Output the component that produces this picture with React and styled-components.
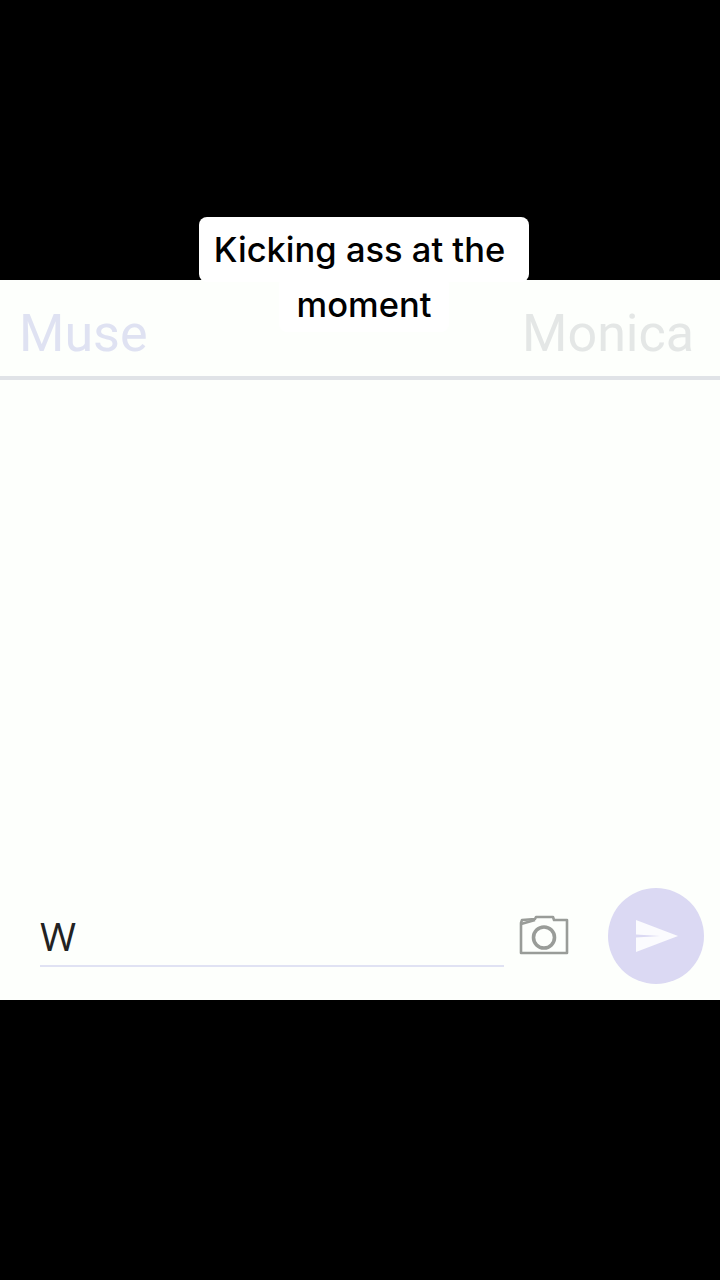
import React from "react";
import styled, { createGlobalStyle } from "styled-components";

const Global = createGlobalStyle`
  html, body { margin: 0; padding: 0; background: #000; }
`;

const Page = styled.div`
  position: relative;
  width: 720px;
  height: 1280px;
  background: #000;
  padding-top: 280px;
  box-sizing: border-box;
  overflow: hidden;
`;

const Panel = styled.main`
  height: 720px;
  background: #fdfffc;
  display: flex;
  flex-direction: column;
`;

const Header = styled.header`
  height: 100px;
  flex: none;
  box-sizing: border-box;
  padding: 25px 26px 0 19px;
  display: flex;
  justify-content: space-between;
  align-items: flex-start;
  border-bottom: 4px solid #e0e3e7;
`;

const Name = styled.div`
  font-family: Roboto, "Liberation Sans", sans-serif;
  font-size: 52px;
  line-height: 58px;
  font-weight: 400;
  color: ${(p) => p.$color};
`;

const Messages = styled.section`
  flex: 1;
`;

const Composer = styled.footer`
  flex: none;
  height: 112px;
  box-sizing: border-box;
  padding: 0 16px 16px 40px;
  display: flex;
  align-items: flex-start;
`;

const InputField = styled.div`
  width: 464px;
  height: 79px;
  box-sizing: border-box;
  border-bottom: 2px solid #e0e2f3;
  font-family: "Open Sans", "Liberation Sans", sans-serif;
  font-size: 39px;
  line-height: 50px;
  padding-top: 23px;
  color: #222;
`;

const CameraButton = styled.div`
  margin: 27px 0 0 15px;
  width: 52px;
  height: 42px;
  flex: none;
  svg { display: block; }
`;

const SendButton = styled.div`
  margin-left: 37px;
  width: 96px;
  height: 96px;
  flex: none;
  border-radius: 50%;
  background: #dbd9f3;
  display: flex;
  align-items: center;
  justify-content: center;
  svg { display: block; margin-left: 1px; }
`;

const Caption = styled.div`
  position: absolute;
  top: 217px;
  left: 199px;
  width: 330px;
  display: flex;
  flex-direction: column;
  align-items: center;
  font-family: Inter, "Liberation Sans", sans-serif;
  font-size: 34.5px;
  font-weight: 500;
  line-height: 55px;
  color: #000;
`;

const CaptionFirstLine = styled.div`
  width: 330px;
  height: 65px;
  box-sizing: border-box;
  padding: 5px 9px 0 0;
  background: #fff;
  border-radius: 8px;
  text-align: center;
  white-space: nowrap;
`;

const CaptionSecondLine = styled.div`
  margin-top: -5px;
  width: 170px;
  height: 55px;
  background: #fff;
  border-radius: 8px;
  text-align: center;
  white-space: nowrap;
`;

export default function App() {
  return (
    <Page>
      <Global />
      <Panel>
        <Header>
          <Name $color="#dfe2f2">Muse</Name>
          <Name $color="#e4e7e6">Monica</Name>
        </Header>
        <Messages />
        <Composer>
          <InputField>W</InputField>
          <CameraButton>
            <svg width="52" height="42" viewBox="0 0 52 42" fill="none" stroke="#999c98" strokeWidth="2.6">
              <path d="M2 38V8L3 5 16 4l1-2H34l1 3H48V38Z" strokeLinejoin="round" />
              <path d="M2 9 16 5" />
              <circle cx="25" cy="22.5" r="10.5" strokeWidth="3.6" />
            </svg>
          </CameraButton>
          <SendButton>
            <svg width="42" height="32" viewBox="0 0 42 32">
              <path d="M0 0 42 16 0 32V17.5L24 16 0 14.5z" fill="#fbfbfe" />
            </svg>
          </SendButton>
        </Composer>
      </Panel>
      <Caption>
        <CaptionFirstLine>Kicking ass at the</CaptionFirstLine>
        <CaptionSecondLine>moment</CaptionSecondLine>
      </Caption>
    </Page>
  );
}
